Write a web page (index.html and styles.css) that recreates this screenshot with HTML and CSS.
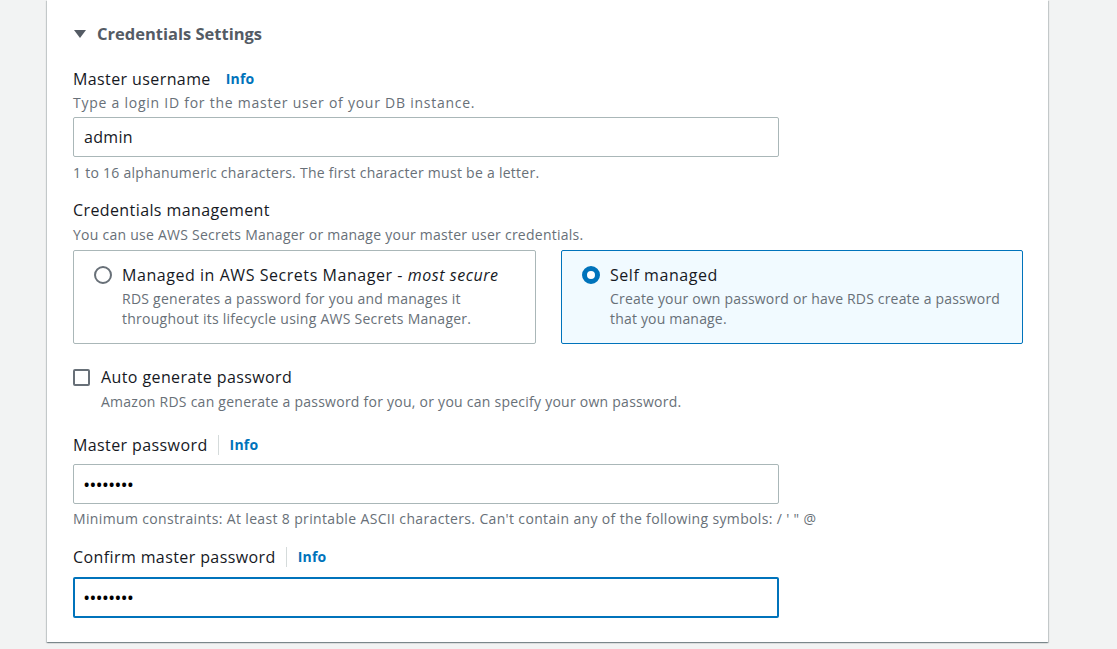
FILE: index.html
```html
<!DOCTYPE html>
<html>
<head>
<meta charset="utf-8">
<link rel="stylesheet" href="styles.css">
</head>
<body>
<div class="card">
  <div class="section-head">
    <svg class="caret" width="12" height="10" viewBox="0 0 12 10"><polygon points="0,1 12,1 6,9" fill="#545b64"/></svg>
    <span>Credentials Settings</span>
  </div>

  <div class="field first">
    <div class="label-row"><span class="label">Master username</span><a class="info">Info</a></div>
    <div class="desc wide">Type a login ID for the master user of your DB instance.</div>
    <input class="input mt4" type="text" value="admin">
    <div class="hint short">1 to 16 alphanumeric characters. The first character must be a letter.</div>
  </div>

  <div class="field gap16">
    <div class="label-row"><span class="label">Credentials management</span></div>
    <div class="desc mt4">You can use AWS Secrets Manager or manage your master user credentials.</div>
    <div class="tiles">
      <div class="tile">
        <span class="radio"></span>
        <div class="tile-body">
          <div class="tile-title">Managed in AWS Secrets Manager - <em>most secure</em></div>
          <div class="tile-desc">RDS generates a password for you and manages it<br>throughout its lifecycle using AWS Secrets Manager.</div>
        </div>
      </div>
      <div class="tile selected">
        <span class="radio on"></span>
        <div class="tile-body">
          <div class="tile-title">Self managed</div>
          <div class="tile-desc tight">Create your own password or have RDS create a password<br>that you manage.</div>
        </div>
      </div>
    </div>
  </div>

  <div class="check-field">
    <span class="checkbox"></span>
    <div>
      <div class="check-label">Auto generate password</div>
      <div class="desc">Amazon RDS can generate a password for you, or you can specify your own password.</div>
    </div>
  </div>

  <div class="field gap22">
    <div class="label-row"><span class="label sep">Master password</span><a class="info">Info</a></div>
    <input class="input mt8" type="password" value="12345678">
    <div class="hint">Minimum constraints: At least 8 printable ASCII characters. Can't contain any of the following symbols: / ' " @</div>
  </div>

  <div class="field gap17">
    <div class="label-row"><span class="label sep">Confirm master password</span><a class="info">Info</a></div>
    <input class="input mt9 focused" type="password" value="12345678">
  </div>
</div>
</body>
</html>
```

FILE: styles.css
```css
* { box-sizing: border-box; }
html, body { margin: 0; padding: 0; }
body {
  background: #f2f3f3;
  font-family: "Open Sans", "Noto Sans", Arial, sans-serif;
  color: #16191f;
  height: 649px;
  overflow: hidden;
}
.card {
  margin-left: 47px;
  width: 1001px;
  background: #fff;
  padding: 23px 26px 24px 26px;
  box-shadow: 0 1px 1px 0 rgba(0,28,36,.3), 1px 1px 1px 0 rgba(0,28,36,.15), -1px 1px 1px 0 rgba(0,28,36,.15);
}
.section-head {
  display: flex;
  align-items: center;
  gap: 11px;
  height: 22px;
  font-size: 16.5px;
  font-weight: 700;
  color: #545b64;
  line-height: 22px;
}
.caret { margin-left: 1px; }
.field { display: flex; flex-direction: column; margin-top: 22px; }
.field.first { margin-top: 23px; }
.gap16 { margin-top: 16px; }
.gap17 { margin-top: 17px; }
.gap22 { margin-top: 22px; }
.label-row { display: flex; align-items: center; height: 22px; }
.label { font-size: 16px; line-height: 22px; color: #16191f; letter-spacing: 0.4px; }
.label.sep {
  border-right: 1px solid #d5dbdb;
  padding-right: 10px;
  line-height: 20px;
}
.info {
  font-size: 14px;
  font-weight: 700;
  color: #0073bb;
  margin-left: 15px;
  line-height: 22px;
  letter-spacing: 0.2px;
}
.label.sep + .info { margin-left: 11px; }
.desc {
  font-size: 14px;
  line-height: 20px;
  color: #687078;
  margin-top: 3px;
  letter-spacing: 0.25px;
  white-space: nowrap;
}
.desc.wide { letter-spacing: 0.75px; }
.desc.mt4 { margin-top: 4px; }
.input {
  margin-top: 5px;
  width: 706px;
  height: 40px;
  border: 1px solid #aab7b8;
  border-radius: 2px;
  padding: 0 10px;
  font-family: inherit;
  font-size: 16px;
  letter-spacing: 0.3px;
  color: #16191f;
  background: #fff;
  outline: none;
}
.input.mt4 { margin-top: 4px; }
.input.mt4 + .hint { margin-top: 6px; }
.input[type=password] { font-size: 14px; letter-spacing: 1px; color: #000; font-weight: 700; }
.mt8 { margin-top: 8px; }
.mt9 { margin-top: 9px; }
.input.focused { border: 2px solid #0073bb; padding: 0 9px; height: 41px; }
.hint {
  font-size: 14px;
  line-height: 20px;
  color: #687078;
  margin-top: 5px;
  letter-spacing: 0.35px;
  white-space: nowrap;
}
.hint.short { letter-spacing: 0.27px; }
.tiles {
  display: grid;
  grid-template-columns: 463px 462px;
  gap: 25px;
  margin-top: 5px;
}
.tile {
  display: flex;
  align-items: flex-start;
  height: 94px;
  border: 1px solid #aab7b8;
  border-radius: 2px;
  padding: 13px 20px 14px 20px;
}
.tile.selected { border-color: #0073bb; background: #f1faff; }
.radio {
  flex: none;
  width: 18px;
  height: 18px;
  margin-top: 2px;
  border: 2px solid #687078;
  border-radius: 50%;
  background: #fff;
  margin-right: 10px;
}
.radio.on {
  border: 5px solid #0073bb;
  background: #fff;
}
.tile-title { font-size: 16px; line-height: 22px; letter-spacing: 0.55px; white-space: nowrap; }
.tile-title em { font-style: italic; }
.tile-desc { font-size: 14px; line-height: 20px; color: #687078; margin-top: 3px; letter-spacing: 0.25px; white-space: nowrap; }
.tile-desc.tight { letter-spacing: 0.18px; }
.check-field { display: flex; align-items: flex-start; margin-top: 22px; }
.checkbox {
  flex: none;
  width: 17px;
  height: 17px;
  border: 2px solid #687078;
  border-radius: 2px;
  margin-top: 3px;
  margin-right: 11px;
}
.check-label { font-size: 16px; line-height: 22px; letter-spacing: 0.4px; }
.check-field .desc { margin-top: 4px; }
```
